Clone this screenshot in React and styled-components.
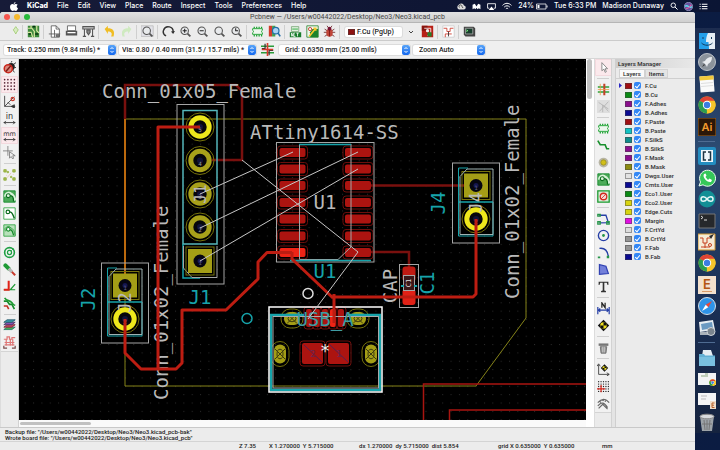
import React from "react";
import styled, { createGlobalStyle, css } from "styled-components";

const Global = createGlobalStyle`
  * { box-sizing: border-box; }
  html, body, #root { height: 100%; }
  body { margin: 0; overflow: hidden; font-family: Roboto, "Liberation Sans", sans-serif; font-size: 7px; color: #222; background: #101a36; }
  button, select { font: inherit; color: inherit; border: 0; margin: 0; padding: 0; background: none; }
`;

/* ---------- shell ---------- */
const Desktop = styled.div`
  height: 100vh; display: grid; grid-template-rows: 12px minmax(0, 1fr);
  background: linear-gradient(90deg, #101a36, #0b1c42);
`;
const MenuBar = styled.nav`
  display: flex; align-items: center; justify-content: space-between;
  padding: 0 12px 0 10px; background: linear-gradient(90deg, #171b38, #0f1634 60%, #0b1534);
  color: #fff; font-weight: 500; font-family: Inter, "Liberation Sans", sans-serif;
`;
const MenuGroup = styled.div`display: flex; align-items: center; gap: ${(p) => p.$gap}px;`;
const MenuItem = styled.button`
  font-weight: ${(p) => (p.$bold ? 800 : 500)}; line-height: 12px; color: #fff; white-space: nowrap;
`;
const Glyph = styled.svg`display: block; flex: none; width: ${(p) => p.$w || 9}px; height: ${(p) => p.$h || 9}px;`;

const Workspace = styled.div`display: grid; grid-template-columns: minmax(0, 1fr) 25px; min-height: 0;`;
const Window = styled.main`
  display: grid; grid-template-rows: 11px 18px 18px minmax(0, 1fr) 14px 9px;
  background: #ececec; border-radius: 3px 3px 0 0; overflow: hidden; min-height: 0;
`;
const TitleBar = styled.header`
  display: grid; grid-template-columns: 40px 1fr 40px; align-items: center;
  background: linear-gradient(#e2e2e2, #cfcfcf); border-bottom: 1px solid #b5b5b5; color: #444;
`;
const Lights = styled.div`display: flex; gap: 4px; padding-left: 4px;`;
const Light = styled.button`width: 6px; height: 6px; border-radius: 50%; background: ${(p) => p.$color};`;
const Title = styled.h1`margin: 0; font-size: 7px; line-height: 9px; font-weight: 400; text-align: center; white-space: nowrap;`;

/* ---------- toolbars ---------- */
const Toolbar = styled.div`
  display: flex; align-items: center; min-width: 0;
  ${(p) => p.$vertical
    ? css`flex-direction: column; background: #f1f1f1; align-self: start; border-bottom: 1px solid #d4d4d4;`
    : css`padding-left: 4px; background: #ececec; border-bottom: 1px solid #cbcbcb;`}
`;
const Tool = styled.button`
  width: 17px; height: 17px; flex: none; display: grid; place-items: center;
  border-radius: 1px;
  background: ${(p) => (p.$on ? "#fbe9ec" : "transparent")};
  box-shadow: ${(p) => (p.$on ? "inset 0 0 0 1px #f3d9de" : "none")};
`;
const Rule = styled.span`
  flex: none; background: #cfcfcf;
  ${(p) => p.$vertical ? css`height: 1px; width: 12px; margin: 2px 0;` : css`width: 1px; height: 14px; margin: 0 2px 0 1px;`}
`;
const Field = styled.label`
  display: flex; align-items: center; height: 10px; background: #fff; flex: none;
  width: ${(p) => p.$w}px; padding-left: ${(p) => p.$pad || 3}px;
  box-shadow: 0 0 0 1px #dcdcdc; border-radius: 2px; overflow: hidden;
`;
const Select = styled.select`appearance: none; flex: 1; min-width: 0; height: 10px; font-size: 7px; line-height: 10px; font-weight: 500; color: #222; outline: none;`;
const Stepper = styled.span`
  width: 8px; height: 10px; flex: none; border-radius: 2px; display: grid; place-items: center;
  background: linear-gradient(#5aa5f8, #1468ee);
`;
const OptionBar = styled.div`
  display: flex; align-items: center; padding-left: 4px; gap: 3px; background: #efefef; border-bottom: 1px solid #d6d6d6;
`;
const Swatch = styled.span`width: 7px; height: 6px; flex: none; background: ${(p) => p.$color}; border: 1px solid #4447;`;
const LayerField = styled(Field)`gap: 2px; margin-left: 3px;`;

/* ---------- editor ---------- */
const Editor = styled.div`
  display: grid; grid-template-columns: 19px minmax(0, 1fr) 8px 18px 3px 80px; min-height: 0;
`;
const CanvasColumn = styled.section`display: grid; grid-template-rows: minmax(0, 1fr) 7px; min-height: 0; background: #fff;`;
const Board = styled.svg`display: block; width: 100%; height: 100%; background: #000; min-height: 0;`;
const HScroll = styled.div`padding: 2px 1px; background: #fafafa;`;
const VScroll = styled.div`padding: 0 2px 0 1px; background: #fff;`;
const Thumb = styled.div`
  border-radius: 3px; background: #c1c1c1;
  ${(p) => p.$vertical ? css`height: 11%; width: 5px;` : css`width: 12.5%; height: 3px;`}
`;
const ToolColumn = styled.aside`background: #ebebeb; border-left: 1px solid #dcdcdc; border-right: 1px solid #d2d2d2; min-height: 0; overflow: hidden;`;
const Gutter = styled.div`background: #e4e4e4;`;

const Panel = styled.aside`background: #ebebeb; border-left: 1px solid #cfcfcf; min-width: 0; overflow: hidden; color: #2b2b2b;`;
const PanelTitle = styled.h2`margin: 0; padding-left: 2px; font-size: 6px; line-height: 9px; font-weight: 500; background: linear-gradient(90deg, #cecece, #e8e8e8);`;
const Tabs = styled.div`display: flex; align-items: end; height: 11px; padding-left: 3px; border-bottom: 1px solid #cfcfcf;`;
const Tab = styled.button`
  height: 9px; padding: 0 4px; font-size: 6px; line-height: 9px; font-weight: 500;
  background: ${(p) => (p.$on ? "#fafafa" : "#e4e4e4")}; box-shadow: inset 0 0 0 1px #d2d2d2;
`;
const LayerList = styled.div`padding: 2px 0 0 3px;`;
const LayerRow = styled.label`
  display: grid; grid-template-columns: 4px 7px 7px 1fr; column-gap: 2px; align-items: center;
  height: 9px; font-size: 6px; line-height: 9px; font-weight: 500; white-space: nowrap;
`;
const LayerName = styled.span`padding-left: 2px;`;
const Check = styled.input`
  appearance: none; margin: 0; width: 7px; height: 7px; border-radius: 2px; background: #3387f5; display: grid; place-items: center;
  &::after { content: ""; width: 2px; height: 4px; border: solid #fff; border-width: 0 1px 1px 0; transform: rotate(40deg); }
`;

const Messages = styled.div`
  padding: 1px 5px; border-top: 1px solid #c9c9c9; font-size: 6px; line-height: 6px; font-weight: 500; overflow: hidden; white-space: nowrap;
`;
const Status = styled.footer`
  display: grid; grid-template-columns: 239fr 30fr 90fr 139fr 104fr 93fr; border-top: 1px solid #d4d4d4;
  font-size: 6px; line-height: 7px; font-weight: 500; white-space: nowrap;
`;

/* ---------- dock ---------- */
const Dock = styled.aside`
  margin: 16px 0 17px; padding: 4px 4px 2px 2px; display: flex; flex-direction: column; align-items: center; justify-content: space-between;
  background: linear-gradient(#1c2c4f, #2c4b72 30%, #1b3157 65%, #15233f);
`;
const DockButton = styled.button`width: 18px; height: 18px; flex: none;`;
const DockRule = styled.span`width: 17px; height: 1px; margin: 2px 0; background: #4f6c92; flex: none;`;

/* ---------- toolbar icon drawings, 16 x 16 ---------- */
const G = "#16a12c";
const lens = (inner) => (
  <g fill="none" stroke="#555" strokeWidth="1.3"><circle cx="7" cy="7" r="4.6" fill="#e8eaec" /><path d="M10.5 10.5 14 14" strokeWidth="2.2" /><g stroke="#222">{inner}</g></g>
);
const chip = (
  <g fill="none" stroke={G} strokeWidth="1.5"><path d="M4 4v-2M7 4v-2M10 4v-2M13 4v-2M4 12v2M7 12v2M10 12v2M13 12v2" /><path d="M2 4.5h12v2a1.6 1.6 0 0 0 0 3v2H2v-2a1.6 1.6 0 0 0 0-3z" fill="#eef7ee" strokeWidth="1.1" /></g>
);
const bug = (
  <g><path d="M2 5l3 2M1 9h4M2 14l3-2M14 5l-3 2M15 9h-4M14 14l-3-2M5 1l2 3M11 1l-2 3" stroke="#622" /><ellipse cx="8" cy="9.5" rx="4" ry="5" fill="#c04538" /><circle cx="8" cy="4.5" r="2.3" fill="#713" /><path d="M8 6v8" stroke="#711" /></g>
);
const target = (
  <g><path d="M8 1 15 8 8 15 1 8z" fill="#111" /><circle cx="8" cy="8" r="4" fill="#f0e020" /><path d="M8 8V4a4 4 0 0 1 4 4zM8 8v4a4 4 0 0 1-4-4z" fill="#111" /></g>
);
const arrowH = <path d="M1 13h14M3.5 11 1.5 13l2 2M12.5 11l2 2-2 2" stroke="#222" fill="none" />;
const ICONS = {
  new: <g><path d="M9 3h6v7H9z" fill="#f5f5f5" /><path d="M12 2l3 4-3 5-3-5z" fill="#d8ecc0" stroke="#9bc66d" /></g>,
  board: <g><path d="M1 1h14v14H1z" fill="#3d8a3c" /><path d="M1 4h5l3 4v7M5 1v3M12 1v6l3 3M1 9h4l2 6" stroke="#d8e6a0" strokeWidth="1.5" fill="none" /><path d="M2 11h3M10 11h4M7 2h3" stroke="#0a3410" strokeWidth="2" /></g>,
  page: <g fill="none" stroke="#555"><path d="M4 1h6l4 4v10H4z" fill="#fff" /><path d="M10 1v4h4M1 11h14M8 6v9" /><path d="M10 12h4v2h-4z" fill="#888" /></g>,
  print: <g><path d="M3 1h10v6H3z" fill="#fff" stroke="#555" /><path d="M1 7h14v6H1z" fill="#555" /><path d="M3 9.5h10" stroke="#fff" strokeWidth="1.5" /></g>,
  plot: <g fill="none" stroke="#555" strokeWidth="1.3"><path d="M1 2h14v3H1z" fill="#ccc" /><path d="M3 5v9M13 5v9M1 14h4M11 14h4" /><path d="M6 6h4v3l-2 3-2-3z" fill="#888" /></g>,
  undo: <path d="M2 5l4-4v3c6 0 9 3 7 10h-3c2-4 0-6-4-6v3z" fill="#f0bd23" />,
  redo: <path d="M14 5l-4-4v3C4 4 1 7 3 14h3C4 10 6 8 10 8v3z" fill="#cfeac0" />,
  find: <g><path d="M0 1h15v13H0z" fill="#e2e2e8" stroke="#bbb" />{lens()}</g>,
  refresh: <g fill="none" stroke="#333" strokeWidth="1.8"><path d="M5 13.5A6 6 0 1 1 13.6 9" /><path d="M11 8l2.7 3L16 7.5z" fill="#333" stroke="none" /></g>,
  zoomIn: lens(<path d="M4.5 7h5M7 4.5v5" />),
  zoomOut: lens(<path d="M4.5 7h5" />),
  zoomFit: lens(),
  zoomSel: lens(<path d="M7 4v3h3" />),
  chip,
  library: <g><path d="M1 1h4v13H1z" fill="#d33c2c" /><path d="M5 1h4v13H5z" fill="#47a04e" /><circle cx="9.5" cy="7" r="4" fill="#a9d4f3" stroke="#246fa8" strokeWidth="1.5" /><path d="M12.5 10 15 14" stroke="#246fa8" strokeWidth="2" /></g>,
  netlist: <g><path d="M3 2h9v6H3z" fill="#e0f0de" stroke="#79a978" /><path d="M4 5h7" stroke={G} /><path d="M1 9h14v6H1z" fill="#187c2b" /><path d="M3 14v-4l2 4v-4M7 10h-1v4h2M9 10h3M10.500 10v4" stroke="#fff" fill="none" /></g>,
  update: <g><path d="M1 1h14v14H1z" fill="#f1f7ec" stroke="#28832f" /><path d="M8 5h7v10H5V9z" fill="#1d822c" /><circle cx="5" cy="5" r="2" fill="none" stroke="#c42c20" /><path d="M4 14 12 4M9 4h3v3" stroke="#f4c72e" strokeWidth="2" fill="none" /></g>,
  bug,
  layers: <g><path d="M1 1h14v14H1z" fill="#b82017" /><path d="M1 1h7v6H1z" fill="#87140f" /><path d="M4 4h8M12 4v5L8 13" stroke="#fff" fill="none" /><path d="M8 9h5v5H8z" fill="#247f2a" /><circle cx="8" cy="7" r="2" fill="#eee" /></g>,
  route: <g fill="none" stroke="#555"><path d="M1 1h14v14H1z" fill="#fff" stroke="#ccc" /><path d="M2 4h4v4h4V4h4M4 15v-4h8" stroke="#c92d1f" /><path d="M8 8v6" stroke="#222" /></g>,
  console: <g><path d="M1 2h12l2 2v10H3L1 12z" fill="#444" /><path d="M3 4h9v7H3z" fill="#183d2c" stroke="#aaa" /><path d="M4 6l2 1-2 1" stroke="#8f8" fill="none" /></g>,
  drc: <g><circle cx="10" cy="7" r="4.500" fill="#222" /><path d="M10 2l1-2M13 4l3-2M14 8h2M12 11l2 3" stroke="#222" /><circle cx="6.500" cy="9.500" r="5" fill="#d9877c" stroke="#c9271c" strokeWidth="1.800" /><path d="M3.500 13 9.500 6" stroke="#7b1a14" strokeWidth="1.800" /></g>,
  grid: <g fill="#523">{[2, 6, 10, 14].flatMap((x) => [2, 6, 10, 14].map((y) => <circle key={x + "-" + y} cx={x} cy={y} r="1" />))}</g>,
  polar: <g fill="none" stroke="#333"><path d="M2 1v13h13M2 14 14 2M6 9l3 3" /><circle cx="12" cy="5" r="2" stroke="#c83b2d" strokeWidth="1.500" /><path d="M10 14l4-2v4z" fill="#333" /></g>,
  inch: <g><text x="8" y="9" textAnchor="middle" fontFamily="DejaVu Sans, sans-serif" fontSize="10" fill="#333">in</text>{arrowH}</g>,
  mm: <g><text x="8" y="9" textAnchor="middle" fontFamily="DejaVu Sans, sans-serif" fontSize="8" fill="#333">mm</text>{arrowH}</g>,
  cursor: <g fill="none" stroke="#777"><path d="M0 6h12M6 0v12" /><path d="M8 7v8l2-2 2 3 1-1-1-3h3z" fill="#eee" /></g>,
  ratsnest: <g fill="#a9ba4f" stroke="#8fae3a"><path d="M1 2h3v3H1zM12 2h3v3h-3zM1 12h3v3H1zM12 12h3v3h-3z" /><circle cx="6" cy="5" r="1" /><circle cx="10" cy="11" r="1" /><path d="M5 12l5-6M4 9h1M12 8h1" stroke="#e3c5b0" /></g>,
  zoneFill: <g><path d="M1 1h14v14H1z" fill="#4cab59" stroke="#12882a" /><path d="M3 8a4 4 0 0 1 7-3c3 1 4 4 5 8" stroke="#d9f4d9" strokeWidth="3.400" fill="none" /><circle cx="6.500" cy="7" r="2.400" fill="#dff5df" stroke="#0b6c1d" strokeWidth="1.300" /><path d="M9 7c3 0 4 3 4 7" stroke="#0b6c1d" strokeWidth="1.600" fill="none" /></g>,
  zoneNone: <g><path d="M1 1h14v14H1z" fill="#fff" stroke="#27a13a" /><circle cx="6" cy="6" r="2.200" fill="none" stroke="#0b6c1d" strokeWidth="1.500" /><path d="M8 6c4 0 4 4 6 8" stroke="#0b6c1d" strokeWidth="1.800" fill="none" /></g>,
  zoneLine: <g><path d="M1 1h14v14H1z" fill="#b8e1bb" stroke="#27a13a" /><path d="M3 9a4 4 0 1 1 7-4c3 1 4 4 5 9" stroke="#2e9a3f" fill="none" /><circle cx="6.500" cy="6.500" r="2.200" fill="#fff" stroke="#188c2c" strokeWidth="1.500" /><path d="M9 7c3 1 3 3 4 7" stroke="#188c2c" strokeWidth="1.600" fill="none" /></g>,
  via: <g fill="none" stroke="#20a044"><circle cx="8" cy="8" r="6" strokeWidth="2" /><circle cx="8" cy="8" r="2.500" strokeWidth="1.500" /><path d="M10 6l3-3" /></g>,
  track: <g><path d="M3 3l4 4" stroke="#1f9a35" strokeWidth="5" strokeLinecap="round" /><path d="M10 10l5 5" stroke="#c8392c" strokeWidth="2.500" /><path d="M7 7l4 4" stroke="#b9b9b9" strokeWidth="4" /></g>,
  contrast: <g fill="none"><path d="M1 12h14M15 5 9 12" stroke="#1f9a35" strokeWidth="1.500" /><path d="M7 1v11H1" stroke="#df2318" strokeWidth="2.500" /></g>,
  curve: <g fill="none" strokeWidth="2"><path d="M1 5h4l3 4h3l3 6" stroke="#188d2b" /><path d="M2 1c3 5 6 2 9 6s3 3 4 3" stroke="#1d9b31" /><path d="M1 11h4l2 4" stroke="#c43325" /></g>,
  stack: <g><path d="M1 13l4-3h10l-4 3z" fill="#49ad52" stroke="#276" /><path d="M1 10l4-3h10l-4 3z" fill="#cb4b63" stroke="#723" /><path d="M1 7l4-3h10l-4 3z" fill="#8d55b5" stroke="#436" /><path d="M1 4l4-3h10l-4 3z" fill="#3a9db0" stroke="#256" /></g>,
  micro: <g fill="none" stroke="#df7777" strokeWidth="1.500"><path d="M1 4h4V1h3v3h3V2h4M2 8h12M2 11h12M4 4v8M9 4v8M12 4v8" /><path d="M1 12v3h4M15 12v3h-4" stroke="#7c4e4e" /></g>,
  pointer: <path d="M6 2v10l2.500-2 1.500 4 1.500-.8L10 9.500h3z" fill="#fff" stroke="#777" />,
  highlight: <g><path d="M1 5h14M1 11h14" stroke="#2aa33a" strokeWidth="1.800" /><path d="M9 1v14" stroke="#c44328" strokeWidth="2.500" /><path d="M4 1v14M1 8h14" stroke="#e8a04a" /></g>,
  local: <g fill="none" stroke="#b2b2b2"><path d="M0 0h16v16H0z" fill="#dedede" stroke="none" /><path d="M2 3l12 8M14 2 3 14M7 6v9M8 7l6 7" /></g>,
  trace: <path d="M1 2l3 5h6l2 5h3" stroke="#188f2c" strokeWidth="2" fill="none" />,
  viaAdd: <g><circle cx="8" cy="8" r="6" fill="#b8b5a5" /><circle cx="8" cy="8" r="3.300" fill="#d2bf18" stroke="#999024" /></g>,
  keepout: <g><path d="M1 1h14v14H1z" fill="#d8efd9" stroke="#1d9a31" strokeWidth="1.600" /><circle cx="8" cy="8" r="4" fill="#f5d9d5" stroke="#d32c20" strokeWidth="1.600" /><path d="M5 11l6-6" stroke="#d32c20" /></g>,
  poly: <g fill="none" stroke="#2740a7" strokeWidth="1.600"><path d="M3 4h8l3 9-11 .500" /><path d="M1 3h3v2H1zM1 12h3v3H1zM12 12h3v3h-3z" stroke="#27964a" /></g>,
  circle: <g><circle cx="8" cy="8" r="6.300" fill="none" stroke="#2740a7" strokeWidth="1.700" /><circle cx="8" cy="8" r="1.700" fill="#27964a" /></g>,
  arc: <g><path d="M3 3c7-1 10 3 11 10" fill="none" stroke="#2740a7" strokeWidth="1.700" /><path d="M1 13h3v2H1zM12 12h3v3h-3z" fill="#27964a" /></g>,
  polygon: <path d="M3 2l8 2 3 9-11 1z" fill="#7380da" stroke="#3142b2" strokeWidth="1.500" />,
  text: <path d="M2 2h12v4h-1l-1-2.500H9V13l2 .500V15H5v-1.500L7 13V3.500H4L3 6H2z" fill="#333" />,
  dimension: <g fill="none" stroke="#2740a7" strokeWidth="1.500"><path d="M1 6v9M15 6v9M1 10h14M4 8l-2 2 2 2M12 8l2 2-2 2" /><path d="M6 7V1l4 6V1" stroke="#222" /></g>,
  target,
  trash: <g><path d="M2 3h12v3H2z" fill="#777" /><path d="M4 7h8l-1 8H5z" fill="#999" stroke="#666" /><path d="M7 7v7M9 7v7" stroke="#ccc" /></g>,
  origin: <g><path d="M2 2v12h13M0 4l2-3 2 3M12 12l3 2-3 2" fill="none" stroke="#333" /><g transform="translate(4 1) scale(.65)">{target}</g></g>,
  gridOrigin: <g fill="#222">{[2, 5, 8, 11, 14].flatMap((x) => [2, 5, 8, 11, 14].map((y) => <circle key={x + "-" + y} cx={x} cy={y} r=".8" />))}<path d="M5 6v9M0 11h10" stroke="#df2b20" strokeWidth="1.500" /></g>,
  measure: <g fill="none" stroke="#666" strokeWidth="1.400"><path d="M1 7c5-6 10-5 14 0M1 11c5-6 8-4 12 2M3 5l2 2M7 3l1 2M11 3l-1 3M2 14l5-5 6 6" /></g>,
  hiContrast: <g><path d="M0 4h16M0 12h16" stroke="#2a9c3a" strokeWidth="2" /><path d="M5 1v6H1M10 15V9h5" stroke="#333" strokeWidth="1.500" fill="none" /><path d="M1 8h14M8 0v16" stroke="#d8392c" strokeWidth="2" /></g>,
};

const ToolIcon = ({ name, on }) => (
  <Tool type="button" aria-label={name} $on={on}>
    <Glyph $w={13} $h={13} viewBox="0 0 16 16">{ICONS[name]}</Glyph>
  </Tool>
);
const ToolRun = ({ items, vertical, active = [] }) =>
  items.map((n, i) => (n === "|" ? <Rule key={i} $vertical={vertical} /> : <ToolIcon key={i} name={n} on={active.includes(n)} />));

const TOP = "new | board | page print plot | undo redo | find | refresh zoomIn zoomOut zoomFit zoomSel | chip library | netlist update bug |".split(" ");
const LEFT = "drc grid polar inch mm cursor | ratsnest | zoneFill zoneNone zoneLine | via track contrast curve | stack micro".split(" ");
const RIGHT = "pointer | highlight local | chip trace viaAdd zoneFill keepout | poly circle arc polygon text | dimension target | trash | origin gridOrigin measure".split(" ");

const Dropdown = ({ label, value, w, pad }) => (
  <Field $w={w} $pad={pad}>
    <Select aria-label={label} defaultValue={value}><option>{value}</option></Select>
    <Stepper><Glyph $w={6} $h={8} viewBox="0 0 6 8"><path d="M1.500 3 3 1.500 4.500 3M1.500 5 3 6.500 4.500 5" fill="none" stroke="#fff" /></Glyph></Stepper>
  </Field>
);

const LAYERS = [
  ["F.Cu", "#a00f12"], ["B.Cu", "#0b8a14"], ["F.Adhes", "#8b0f8d"], ["B.Adhes", "#0b0b92"], ["F.Paste", "#a00f12"],
  ["B.Paste", "#12c3c3"], ["F.SilkS", "#0f8c8c"], ["B.SilkS", "#8b0f8d"], ["F.Mask", "#8b0f8d"], ["B.Mask", "#8b8b10"],
  ["Dwgs.User", "#e2e2e2"], ["Cmts.User", "#0b0b92"], ["Eco1.User", "#0b8a14"], ["Eco2.User", "#d8d410"], ["Edge.Cuts", "#d8d410"],
  ["Margin", "#e010e0"], ["F.CrtYd", "#dcdcdc"], ["B.CrtYd", "#949494"], ["F.Fab", "#949494"], ["B.Fab", "#0b0b92"],
];

/* ---------- circuit board ---------- */
const RED = "#bd1d12";
const DIM = "#79100e";
const CYAN = "#16a3aa";
const GREY = "#a5a5a5";
const Label = ({ x, y, children, up, color = "#b9b9b9", size = 19, anchor = "middle" }) => (
  <text x={x} y={y} transform={up ? `rotate(-90 ${x} ${y})` : undefined} textAnchor={anchor} fill={color} fontSize={size} fontFamily="'DejaVu Sans Mono', monospace">{children}</text>
);
const Ring = ({ x, y, hot, digit }) => (
  <g>
    <circle cx={x} cy={y} r="14" fill="none" stroke="#77730c" />
    <circle cx={x} cy={y} r="9.200" fill="#07070c" stroke={hot ? "#eee81c" : "#a8a11a"} strokeWidth="5" />
    <circle cx={x} cy={y} r="3" fill="#101238" />
    <Label x={x} y={y + 5} size={6} color="#999">{digit}</Label>
  </g>
);
const SquarePad = ({ x, y, digit }) => (
  <g>
    <rect x={x - 14} y={y - 14} width="28" height="28" fill="none" stroke="#77730c" />
    <rect x={x - 12} y={y - 12} width="24" height="24" fill="#a49e16" />
    <circle cx={x} cy={y} r="6.500" fill="#060611" />
    <circle cx={x} cy={y} r="2.500" fill="#14164f" />
    <Label x={x} y={y + 4} size={6} color="#5c607e">{digit}</Label>
  </g>
);
const TwoPin = ({ x, y, name }) => (
  <g fill="none">
    <rect x={x - 23.500} y={y - 22.500} width="47" height="80" stroke={GREY} />
    <path d={`M${x - 8} ${y - 17.500}H${x - 17.500}V${y + 50.500}H${x + 17}V${y + 16.500}H${x - 17.500}`} stroke={CYAN} />
    <SquarePad x={x} y={y} digit="1" />
    <path d={`M${x - 16} ${y - 9}l7-7.500H${x + 17}V${y + 49}H${x - 16}z`} stroke="#9fb2b2" />
    <Ring x={x} y={y + 33.500} hot digit="2" />
    <Label x={x + 6} y={y + 17} up size={17}>{name}</Label>
    <path d={`M${x - 17.500} ${y + 16.500}H${x + 17}`} stroke={CYAN} />
  </g>
);
const SmdPad = ({ x, y, hot, w = 26, h = 9 }) => (
  <g>
    <rect x={x - w / 2 - 2} y={y - h / 2 - 2} width={w + 4} height={h + 4} rx="3" fill="none" stroke="#6c0f0c" />
    <rect x={x - w / 2} y={y - h / 2} width={w} height={h} rx="2" fill={hot ? "#ee2416" : "#ac1410"} />
  </g>
);
const OvalPad = ({ x, y, w, h }) => (
  <g fill="none" stroke="#77730c">
    <rect x={x - w / 2 - 3} y={y - h / 2 - 3} width={w + 6} height={h + 6} rx="9" />
    <rect x={x - w / 2} y={y - h / 2} width={w} height={h} rx="6" fill="#a49e16" stroke="none" />
    <path d={`M${x - 5} ${y - 5}l10 10M${x + 5} ${y - 5}l-10 10`} stroke="#3d3b10" />
    <ellipse cx={x} cy={y} rx={w / 4} ry={h / 4} stroke="#3d3b10" />
  </g>
);
const pinRows = [152.500, 169, 185.500, 202.500, 219, 236, 252.500];

const BoardView = () => (
  <Board viewBox="19 59 567 361" preserveAspectRatio="xMidYMid slice" role="img" aria-label="Board layout">
    <defs>
      <pattern id="dots" x="24.700" y="68.500" width="8.350" height="8.350" patternUnits="userSpaceOnUse"><rect width="1" height="1" fill="#2b2b2b" /></pattern>
    </defs>
    <rect x="19" y="59" width="567" height="361" fill="url(#dots)" />
    <g fill="none">
      <path d="M125 119H526V318L476 386H125z" stroke="#858319" />
      <path d="M125 119V285" stroke="#bb690d" strokeWidth="2" />
      <g stroke={DIM} strokeWidth="2.500">
        <path d="M125 119V85H236L242 91V160H212M358 185.500H468M358 252H409V270" />
      </g>
      <path d="M423.500 420V384H586M449.500 420V410H586" stroke="#a91510" strokeWidth="1.500" />
    </g>
    <Label x={102} y={98} anchor="start">Conn_01x05_Female</Label>
    <Label x={250} y={139} anchor="start">ATtiny1614-SS</Label>
    <Label x={168} y={400} up anchor="start">Conn_01x02_Female</Label>
    <Label x={519} y={299} up anchor="start">Conn_01x02_Female</Label>

    <TwoPin x={125} y={285.500} name="J2" />
    <TwoPin x={476} y={185.500} name="J4" />

    <g fill="none">
      <rect x="177" y="104.500" width="47" height="179.500" stroke={GREY} />
      <path d="M183 244V110.500H217V244z" stroke="#55b6bb" strokeWidth="1.500" />
      <path d="M183 244V278H200" stroke={CYAN} strokeWidth="1.500" />
      <path d="M183.500 246V268L192 277.500H217V246" stroke={GREY} />
    </g>
    <Ring x={200} y={127} hot digit="5" />
    <Ring x={200} y={160.500} digit="4" />
    <Ring x={200} y={194} digit="3" />
    <Ring x={200} y={227} digit="2" />
    <SquarePad x={200} y={261} digit="1" />
    <Label x={206} y={194} up size={16}>J1</Label>

    {pinRows.map((y, i) => (
      <g key={y}><SmdPad x={292.500} y={y} hot={i === 6} /><SmdPad x={358} y={y} /></g>
    ))}
    <g fill="none" stroke={GREY}>
      <rect x="276.500" y="142.500" width="97.500" height="119.500" />
      <path d="M299.500 144V259.500H338L351 247V144" />
      <path d="M299 144.500H351M290 260.500H371" stroke={CYAN} strokeWidth="1.500" />
    </g>
    <Label x={325} y={209}>U1</Label>
    <Label x={325} y={278} color={CYAN}>U1</Label>
    <Label x={200} y={304} color={CYAN}>J1</Label>
    <Label x={95} y={299} up color={CYAN}>J2</Label>
    <Label x={445} y={203} up color={CYAN}>J4</Label>
    <Label x={434} y={283} up color={CYAN}>C1</Label>
    <Label x={397} y={286} up>CAP</Label>

    <g fill="none">
      <rect x="399.500" y="264.500" width="19" height="43" stroke={GREY} />
      <rect x="402.500" y="266.500" width="13" height="15" rx="3" fill="#c01a13" />
      <rect x="402.500" y="289" width="13" height="16" rx="3" fill="#e02116" />
      <rect x="403.500" y="275.500" width="11" height="15" fill="#3b1719" stroke={GREY} />
      <path d="M401 286h3M414 286h3" stroke={CYAN} strokeWidth="2" />
    </g>
    <Label x={411} y={283} up size={7} color="#ddd">C1</Label>

    {[309, 317, 325, 333, 341].map((x) => <SmdPad key={x} x={x} y={318} w={6} h={18} hot={x === 333} />)}
    <OvalPad x={292} y={318.500} w={16} h={13} />
    <OvalPad x={358} y={318.500} w={16} h={13} />
    <OvalPad x={280} y={354} w={12} h={19} />
    <OvalPad x={371} y={354} w={12} h={19} />
    <SmdPad x={312.500} y={353.500} w={21} h={21} />
    <SmdPad x={338.500} y={353.500} w={21} h={21} />
    <Label x={313} y={357} size={9} color="#6a2450">2</Label>
    <Label x={339} y={357} size={9} color="#6a2450">1</Label>
    <g fill="none">
      <path d="M304 345l18 17M330 345l18 17" stroke="#572050" />
      <path d="M304 315H271V390H380V315H348" stroke={CYAN} strokeWidth="2.500" />
      <rect x="273" y="316.500" width="105.500" height="71.500" stroke="#aaa" />
      <rect x="269" y="307" width="113" height="85" stroke="#fff" strokeWidth="1.500" />
      <circle cx="308" cy="293.500" r="5" stroke="#ddd" strokeWidth="1.500" />
      <circle cx="247" cy="318.500" r="5" stroke={CYAN} strokeWidth="1.500" />
    </g>
    <g fill="none" stroke={RED} strokeWidth="3" strokeLinejoin="round">
      <path d="M200 127H158V369" />
      <path d="M125 319V353L141 369H176L182 363V310H226L258 279V262L267 252.500H292" />
      <path d="M292 252V259L333 298M334 294V323M334 297H473L476 294V219" />
    </g>
    <Label x={325} y={326} color="#3f9ca3">USB_A</Label>
    <Label x={325} y={357} size={17} color="#eee">*</Label>
    <path d="M200 194 293 152M200 228 358 152M200 261 358 169M242 160 358 252 308 319" fill="none" stroke="#c6c6c6" />
  </Board>
);

/* ---------- dock drawings, 18 x 18 ---------- */
const chrome = (
  <g><circle cx="9" cy="9" r="8.500" fill="#f5c52b" /><path d="M9 9 1.600 4.800A8.500 8.500 0 0 1 16.400 4.800z" fill="#df4435" /><path d="M1.600 4.800A8.500 8.500 0 0 0 9 17.500L12 10z" fill="#2b9e50" /><path d="M8.500 4.800h8A8.500 8.500 0 0 1 9 17.500z" fill="#f5c52b" /><circle cx="9" cy="9" r="4.200" fill="#fff" /><circle cx="9" cy="9" r="3.200" fill="#3c7de0" /></g>
);
const iconText = (t, fill, size = 10) => <text x="9" y="12.500" textAnchor="middle" fontFamily="Inter, sans-serif" fontWeight="600" fontSize={size} fill={fill}>{t}</text>;
const DOCK = [
  ["Finder", <g><path d="M1 1h16v16H1z" fill="#249fea" /><path d="M10 1h7v16h-6c0-3-.5-5-.5-7H8c0-3 .5-6 2-9z" fill="#e6eef5" /><path d="M5 5v2M13.500 5v2M3.500 11c3 3 8 3 11 0" stroke="#143c60" fill="none" /></g>],
  ["Launchpad", <g><circle cx="9" cy="9" r="8.500" fill="#8b939b" stroke="#bcc2c8" /><path d="M14 4c-4 0-6 2-7 4l-3 1 2 1 2 2 1 2 1-3c2-1 4-3 4-7z" fill="#e9ecef" /><path d="M6 11l-2 3 3-2" fill="#333" /></g>],
  ["Notes", <g transform="rotate(-4 9 9)"><path d="M2 1h14v16H2z" fill="#fafafa" /><path d="M2 1h14v4H2z" fill="#f1c83c" /><path d="M3 8h12M3 11h12" stroke="#ddd" /></g>],
  ["Chrome", chrome],
  ["Illustrator", <g><path d="M0 0h18v18H0z" fill="#2b1708" stroke="#a2651c" />{iconText("Ai", "#f39a2d", 11)}</g>],
  null,
  ["Brackets", <g><rect width="18" height="18" rx="2" fill="#238dc0" /><path d="M3 3h12v12H3z" fill="#eef7fb" /><path d="M8 5H5.500v8H8M10 5h2.500v8H10" stroke="#1b3443" strokeWidth="1.500" fill="none" /></g>],
  ["WhatsApp", <g><path d="M1 17l1.500-4A8 8 0 1 1 5 15.800z" fill="#35c759" stroke="#eafbee" /><path d="M6 5c-2 3 3 9 7 8l1-2-2.500-1.500L10 11 7.500 8l1-1.500L7.500 4.500z" fill="#fff" /></g>],
  ["Arduino", <g><circle cx="9" cy="9" r="8.500" fill="#128f96" /><path d="M9 9C7 6 3 6 3 9s4 3 6 0 6-3 6 0-4 3-6 0z" fill="none" stroke="#e6f7f7" strokeWidth="1.500" /></g>],
  ["Terminal", <g><path d="M1 2h16v14H1z" fill="#26282b" stroke="#777" /><path d="M3 4l2 1.500L3 7M6 8h3" stroke="#ddd" fill="none" /></g>],
  ["KiCad", <g><path d="M0 1h17v16H0z" fill="#f6ecd6" stroke="#d29730" /><path d="M2 5h3v5h4V5h3M3 14h9M7 10v5" stroke="#c5401e" fill="none" /><circle cx="12" cy="12" r="1.500" fill="none" stroke="#c5401e" /><path d="M11 3l5-2-3 5" fill="#2c2c2c" /></g>],
  ["Chrome window", chrome],
  ["Eagle", <g><path d="M0 0h18v18H0z" fill="#f2e0cd" />{iconText("E", "#b45513", 13)}<path d="M4 15.500h10" stroke="#d99a68" /></g>],
  ["Safari", <g><circle cx="9" cy="9" r="8.500" fill="#2e93e8" stroke="#d4dde4" /><path d="M14 4 10.300 10.300 7.700 7.700z" fill="#ed4635" /><path d="M4 14l3.700-6.300 2.600 2.600z" fill="#fff" /></g>],
  ["Preview", <g><path d="M1 3l14-2 2 10-15 2z" fill="#e7edf2" /><path d="M3 5l11-2 1 6-11 2z" fill="#6b9ac2" /><path d="M2 13h10v3H2z" fill="#aab2ba" /><circle cx="13" cy="12.500" r="4" fill="#7b858e" stroke="#cfd4d8" /></g>],
  null,
  ["Downloads", <g><path d="M5 1h8l2 6H4z" fill="#e5edf2" /><path d="M1 5h5l1 1.500h10V17H1z" fill="#62afd3" /><path d="M1 8h16v9H1z" fill="#79c0df" /></g>],
  ["Browser document", <g><path d="M0 3h18v12H0z" fill="#f2f4f5" /><path d="M3 6h7M7 4h3" stroke="#8caa82" /><g transform="translate(11 9) scale(.4)">{chrome}</g></g>],
  ["Eagle document", <g><path d="M0 2h18v12H0z" fill="#f4f5f6" /><path d="M3 5h6M3 8h5" stroke="#bbb" /><path d="M12 10h6v8h-6z" fill="#f0ddc9" /><path d="M16.500 12H14v4.500h2.500M14 14.200h2" stroke="#b8612a" fill="none" /></g>],
  ["Trash", <g><path d="M2 3h14l-2 15H4z" fill="#9da3a8" /><ellipse cx="9" cy="3.500" rx="7" ry="2.300" fill="#d8dbde" stroke="#888" /><path d="M6 7l1 10M9 7v10M12 7l-1 10M4 11h10" stroke="#777" /></g>],
];

export default function App() {
  return (
    <>
      <Global />
      <Desktop>
        <MenuBar>
          <MenuGroup $gap={9}>
            <Glyph $w={8} $h={9} viewBox="0 0 16 18"><path d="M11 0c0 2-1.500 4-3.500 4C7.500 2 9 .500 11 0zM8 5c1.500 0 2-1 4-1 1.500 0 2.500.700 3.300 1.700-3 2-2.500 5.800.700 7C15 15.500 13.500 18 12 18c-1.400 0-2-.800-3.500-.800S6.300 18 5 18C2.500 18 0 13.500 0 10c0-4 2.500-6 4.800-6C6.300 4 7.200 5 8 5z" fill="#fff" /></Glyph>
            {["KiCad", "File", "Edit", "View", "Place", "Route", "Inspect", "Tools", "Preferences", "Help"].map((m) => (
              <MenuItem key={m} type="button" $bold={m === "KiCad"}>{m}</MenuItem>
            ))}
          </MenuGroup>
          <MenuGroup $gap={6}>
            <Glyph $w={10} viewBox="0 0 20 16"><path d="M6 14a5 5 0 0 1-1-9 6 6 0 0 1 11 1 4 4 0 0 1-1 8z" fill="#ddd" /><path d="M7 10a3 3 0 1 1 5-2l2 3" fill="none" stroke="#222" strokeWidth="1.500" /></Glyph>
            <Glyph viewBox="0 0 16 16"><path d="M1 13V5l4-2 3 5 3-5 4 2v8l-3-2-2 2-2-3-2 3-2-2z" fill="#fff" /></Glyph>
            <Glyph viewBox="0 0 16 16"><path d="M4 11H1V3h14v8h-3" fill="none" stroke="#fff" strokeWidth="1.500" /><path d="M8 8l5 6H3z" fill="#fff" /></Glyph>
            <Glyph $w={10} viewBox="0 0 18 16"><path d="M1 6c5-5 11-5 16 0M4 9c3-3 7-3 10 0M7 12c1-1 3-1 4 0" stroke="#fff" strokeWidth="1.800" fill="none" /></Glyph>
            <MenuGroup $gap={2}>
              <MenuItem type="button">24%</MenuItem>
              <Glyph $w={12} $h={7} viewBox="0 0 24 14"><path d="M1 2h19v10H1z" fill="none" stroke="#fff" strokeWidth="1.500" /><path d="M3 4h4v6H3zM21 5h2v4h-2z" fill="#fff" /></Glyph>
            </MenuGroup>
            <MenuItem type="button">Tue 6:33 PM</MenuItem>
            <MenuItem type="button">Madison Dunaway</MenuItem>
            <Glyph $w={8} $h={8} viewBox="0 0 16 16"><circle cx="6.500" cy="6.500" r="4.500" fill="none" stroke="#fff" strokeWidth="1.800" /><path d="M10 10l5 5" stroke="#fff" strokeWidth="2" /></Glyph>
            <Glyph viewBox="0 0 16 16"><circle cx="8" cy="8" r="7.500" fill="#66519f" stroke="#b7bdd7" /><path d="M2 8c4-5 8 5 12 0" fill="none" stroke="#5ce1ed" strokeWidth="2.500" /><path d="M4 11c4 2 6-3 9-6" fill="none" stroke="#e75da0" strokeWidth="2" /></Glyph>
            <Glyph viewBox="0 0 16 16"><path d="M1 4h2M1 8h2M1 12h2M5 4h10M5 8h10M5 12h10" stroke="#fff" strokeWidth="1.800" /></Glyph>
          </MenuGroup>
        </MenuBar>
        <Workspace>
          <Window>
            <TitleBar>
              <Lights><Light $color="#f8564f" aria-label="Close" /><Light $color="#f6b92f" aria-label="Minimise" /><Light $color="#27b93c" aria-label="Zoom" /></Lights>
              <Title>Pcbnew — /Users/w00442022/Desktop/Neo3/Neo3.kicad_pcb</Title>
            </TitleBar>
            <Toolbar>
              <ToolRun items={TOP} />
              <LayerField $w={57}>
                <Swatch $color="#8d1212" />
                <Select aria-label="Active layer" defaultValue="F.Cu (PgUp)"><option>F.Cu (PgUp)</option></Select>
              </LayerField>
              <Tool type="button" aria-label="Choose layer"><Glyph $w={6} $h={6} viewBox="0 0 6 6"><path d="M1 2l2 2 2-2" fill="none" stroke="#444" /></Glyph></Tool>
              <ToolRun items={["layers", "|", "route", "|", "console"]} />
            </Toolbar>
            <OptionBar>
              <Dropdown label="Track width" value="Track: 0.250 mm (9.84 mils) *" w={112} />
              <Dropdown label="Via size" value="Via: 0.80 / 0.40 mm (31.5 / 15.7 mils) *" w={137} />
              <ToolIcon name="hiContrast" />
              <Dropdown label="Grid" value="Grid: 0.6350 mm (25.00 mils)" w={131} pad={6} />
              <Dropdown label="Zoom" value="Zoom Auto" w={72} pad={6} />
            </OptionBar>
            <Editor>
              <ToolColumn><Toolbar $vertical><ToolRun items={LEFT} vertical active={["grid", "mm"]} /></Toolbar></ToolColumn>
              <CanvasColumn>
                <BoardView />
                <HScroll><Thumb /></HScroll>
              </CanvasColumn>
              <VScroll><Thumb $vertical /></VScroll>
              <ToolColumn><Toolbar $vertical><ToolRun items={RIGHT} vertical active={["pointer"]} /></Toolbar></ToolColumn>
              <Gutter />
              <Panel>
                <PanelTitle>Layers Manager</PanelTitle>
                <Tabs role="tablist"><Tab role="tab" $on>Layers</Tab><Tab role="tab">Items</Tab></Tabs>
                <LayerList>
                  {LAYERS.map(([name, color], i) => (
                    <LayerRow key={name}>
                      {i === 0 ? <Glyph $w={4} $h={5} viewBox="0 0 4 5"><path d="M0 0l3 2.500L0 5z" fill="#2a28c4" /></Glyph> : <span />}
                      <Swatch $color={color} />
                      <Check type="checkbox" defaultChecked />
                      <LayerName>{name}</LayerName>
                    </LayerRow>
                  ))}
                </LayerList>
              </Panel>
            </Editor>
            <Messages>
              <div>Backup file: "/Users/w00442022/Desktop/Neo3/Neo3.kicad_pcb-bak"</div>
              <div>Wrote board file: "/Users/w00442022/Desktop/Neo3/Neo3.kicad_pcb"</div>
            </Messages>
            <Status>
              <span /><span>Z 7.35</span><span>X 1.270000&nbsp; Y 5.715000</span><span>dx 1.270000&nbsp; dy 5.715000&nbsp; dist 5.854</span><span>grid X 0.635000&nbsp; Y 0.635000</span><span>mm</span>
            </Status>
          </Window>
          <Dock>
            {DOCK.map((d, i) => d
              ? <DockButton key={i} type="button" aria-label={d[0]}><Glyph $w={18} $h={18} viewBox="0 0 18 18">{d[1]}</Glyph></DockButton>
              : <DockRule key={i} />)}
          </Dock>
        </Workspace>
      </Desktop>
    </>
  );
}
